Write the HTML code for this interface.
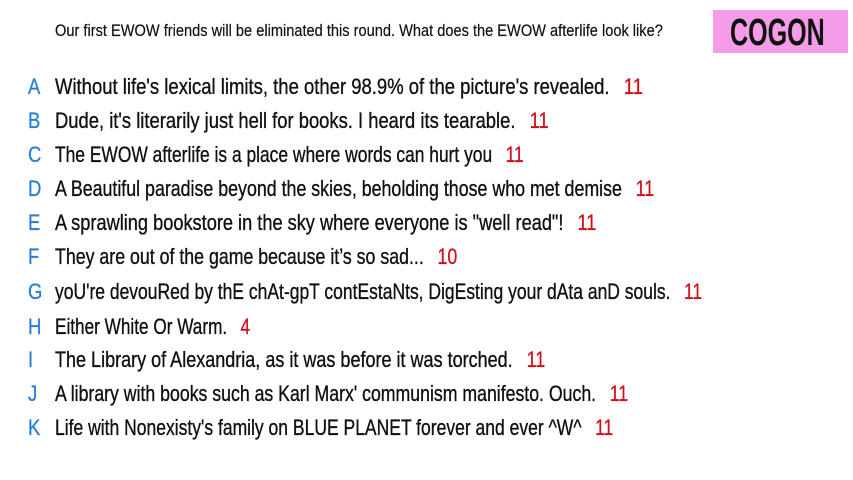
<!DOCTYPE html>
<html><head><meta charset="utf-8"><style>
html,body{margin:0;padding:0;background:#fff;width:853px;height:480px;overflow:hidden;position:relative;font-family:"Liberation Sans Narrow","Liberation Sans",sans-serif;}
.h{position:absolute;left:55px;top:22px;font-size:16.5px;color:#111;white-space:nowrap;transform:scaleX(0.885);transform-origin:0 0;-webkit-text-stroke:0.2px #111;}
.box{position:absolute;left:713px;top:10px;width:135px;height:43px;background:#f59ce9;}
.box span{position:absolute;left:17px;top:2px;font-size:38px;color:#111;transform:scaleX(0.66);transform-origin:0 0;white-space:nowrap;font-weight:bold;}
.r{position:absolute;left:0;height:24px;font-size:22px;white-space:nowrap;line-height:24px;}
.l{position:absolute;left:28px;color:#2a7fd4;transform:scaleX(0.84);transform-origin:0 0;-webkit-text-stroke:0.3px #2a7fd4;}
.t{position:absolute;left:55px;color:#111;transform:scaleX(0.84);transform-origin:0 0;-webkit-text-stroke:0.35px #111;}
.n{color:#d0101a;margin-left:17px;-webkit-text-stroke:0.3px #d0101a;}
</style></head><body>
<div class="h">Our first EWOW friends will be eliminated this round. What does the EWOW afterlife look like?</div>
<div class="box"><span>COGON</span></div>

<div class="r" style="top:75px"><span class="l">A</span><span class="t" style="transform:scaleX(.84)">Without life's lexical limits, the other 98.9% of the picture's revealed.<span class="n">11</span></span></div>
<div class="r" style="top:109px"><span class="l">B</span><span class="t" style="transform:scaleX(.836)">Dude, it's literarily just hell for books. I heard its tearable.<span class="n">11</span></span></div>
<div class="r" style="top:143px"><span class="l">C</span><span class="t" style="transform:scaleX(.791)">The EWOW afterlife is a place where words can hurt you<span class="n">11</span></span></div>
<div class="r" style="top:177px"><span class="l">D</span><span class="t" style="transform:scaleX(.809)">A Beautiful paradise beyond the skies, beholding those who met demise<span class="n">11</span></span></div>
<div class="r" style="top:211px"><span class="l">E</span><span class="t" style="transform:scaleX(.827)">A sprawling bookstore in the sky where everyone is "well read"!<span class="n">11</span></span></div>
<div class="r" style="top:245px"><span class="l">F</span><span class="t" style="transform:scaleX(.807)">They are out of the game because it’s so sad...<span class="n">10</span></span></div>
<div class="r" style="top:280px"><span class="l">G</span><span class="t" style="transform:scaleX(.795)">yoU're devouRed by thE chAt-gpT contEstaNts, DigEsting your dAta anD souls.<span class="n">11</span></span></div>
<div class="r" style="top:315px"><span class="l">H</span><span class="t" style="transform:scaleX(.781)">Either White Or Warm.<span class="n">4</span></span></div>
<div class="r" style="top:348px"><span class="l">I</span><span class="t" style="transform:scaleX(.819)">The Library of Alexandria, as it was before it was torched.<span class="n">11</span></span></div>
<div class="r" style="top:382px"><span class="l">J</span><span class="t" style="transform:scaleX(.804)">A library with books such as Karl Marx' communism manifesto. Ouch.<span class="n">11</span></span></div>
<div class="r" style="top:416px"><span class="l">K</span><span class="t" style="transform:scaleX(.796)">Life with Nonexisty's family on BLUE PLANET forever and ever ^W^<span class="n">11</span></span></div>
</body></html>
